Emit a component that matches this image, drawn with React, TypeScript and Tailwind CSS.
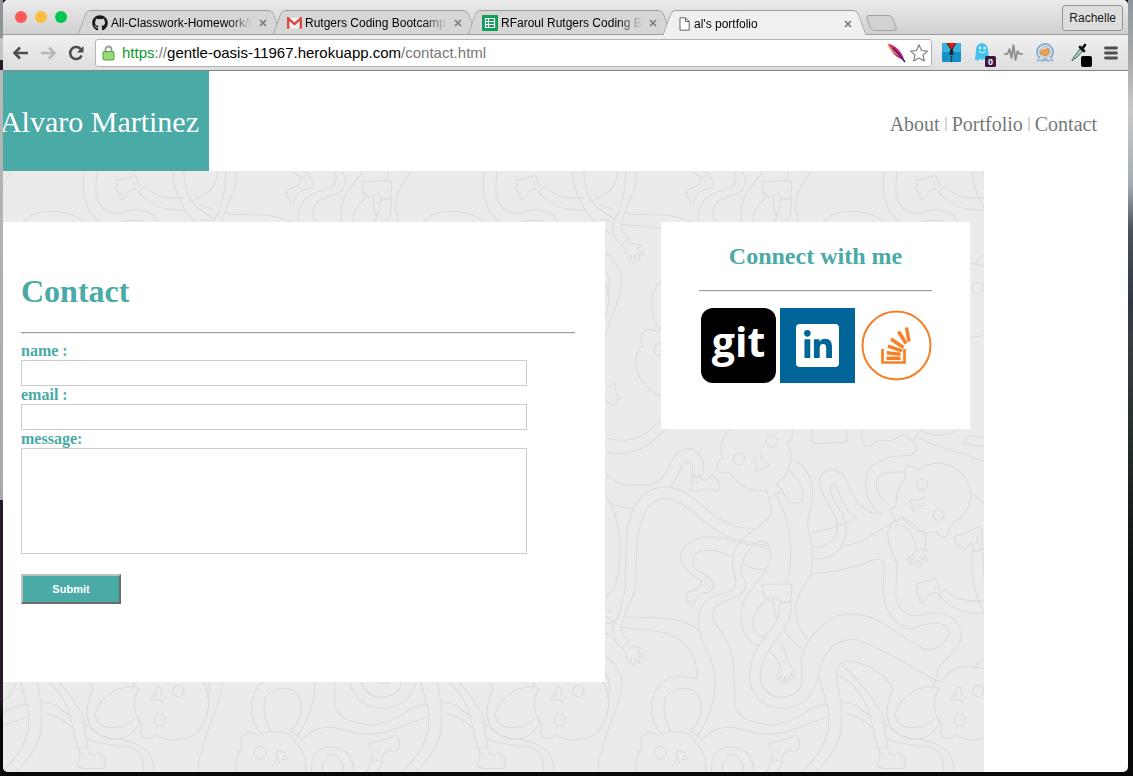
import type { ReactNode } from "react";
import { FaGithub, FaLinkedinIn } from "react-icons/fa";

const doodles = [
  // long limbs, left half
  "M-30 20C20 70 110 85 182 0M-20 85C60 120 150 100 215 0",
  "M15 155C45 205 110 195 140 195C200 190 205 130 230 100C265 70 320 90 308 165M208 203C240 180 240 120 265 122C285 125 275 150 278 165",
  "M30 247C55 265 90 265 103 262M53 600C60 560 75 540 76 490C80 400 75 300 103 262C140 190 210 190 260 220C310 250 340 310 440 325L465 325",
  "M65 622C60 600 110 520 108 490C108 400 110 320 135 275C170 220 210 230 250 255C300 290 350 345 410 360L425 360",
  "M-10 190C10 220 25 235 30 247C75 340 60 440 50 480C45 510 30 530 -37 558",
  "M53 590C30 620 30 650 65 685M65 622C60 640 75 655 88 665M63 685L90 665",
  "M0 565L40 577M75 590C160 595 220 590 260 610Q285 620 298 635",
  "M0 607L35 610M60 622C130 628 200 630 240 660C280 690 290 730 292 770C285 785 260 765 235 768C170 775 155 830 155 860C155 900 165 920 185 943",
  "M213 935C190 900 190 860 195 835C215 800 260 800 285 815C310 840 305 870 300 890C290 920 275 930 268 943",
  "M298 640C292 600 290 560 330 535C360 515 400 525 408 490C410 470 398 455 398 440C395 400 410 370 440 345C480 320 515 290 515 275Q515 255 505 237",
  "M340 600C335 550 370 545 400 535C440 520 440 490 435 480C420 460 422 450 428 425C440 390 470 360 490 364C520 370 515 420 500 445C480 490 425 520 424 580C422 630 440 665 475 678",
  "M298 640C320 700 350 730 345 810C340 860 310 930 290 950",
  "M340 600C370 650 402 680 402 760L404 850C410 890 450 910 510 914C590 914 620 855 685 852",
  "M305 960C360 900 420 925 470 940C560 955 600 910 685 892M275 932L305 960",
  "M445 375C400 365 380 350 320 350C260 355 240 395 242 410C245 450 280 460 303 485M398 412C370 395 330 385 295 395C270 410 275 440 290 450L325 468M300 486L328 467",
  "M420 362L505 378M445 373L505 385M430 430Q460 452 497 449",
  "M-10 694C10 700 70 740 66 800C60 860 20 910 -7 1040L-12 1110M-25 730C20 750 40 780 22 835",
  // limbs, right half
  "M548 212C560 250 590 255 605 245C615 210 600 180 565 150M580 118C640 150 650 220 625 290C620 320 625 330 632 360C640 400 635 430 634 460C610 510 575 530 592 600C600 630 610 645 623 655",
  "M530 228C570 300 575 380 570 440C568 470 560 490 552 492M538 551L575 545",
  "M575 545C575 600 560 620 520 670C490 710 480 740 480 770C490 830 530 835 560 830C620 815 603 780 605 720C610 660 670 610 700 592C740 575 800 580 850 610C900 640 960 690 985 688C1030 688 1060 640 1040 620C1010 595 960 620 930 627C880 620 850 560 850 510C848 460 865 425 835 417C810 418 800 435 760 440C710 455 680 460 634 460",
  "M538 551C540 600 520 620 490 655C450 710 450 740 449 780C455 840 510 865 540 865C600 865 640 835 655 765C665 690 710 660 760 658C800 662 900 720 1010 783",
  "M520 535C515 560 525 590 532 597M500 540C450 580 440 640 500 655M553 632Q580 668 608 685",
  "M535 670Q560 690 560 720M508 693Q530 710 535 732M532 733L562 717",
  "M712 740C740 700 830 740 870 790C890 810 858 840 860 880C865 930 910 960 950 958C1000 950 1010 920 1022 908M1005 800C940 795 885 850 886 890C895 930 960 935 1005 895",
  "M712 740C700 780 735 850 724 920C720 980 680 1020 652 1055M655 765C680 850 690 880 685 920C680 980 640 1020 607 1055",
  "M725 735Q800 800 845 880L863 985M712 765C780 790 815 870 830 980M829 980L866 985",
  "M727 848C770 845 780 870 815 890M733 883C770 880 790 905 828 930",
  "M850 905C900 965 940 950 990 965C1040 980 1065 1010 1060 1060M862 958C930 985 990 970 1015 995Q1035 1020 1030 1060",
  "M1015 768C990 740 1080 700 1083 650C1085 610 1050 570 990 580C960 590 900 600 888 530C885 500 895 440 890 430C850 340 860 330 888 298",
  "M1122 745Q1135 720 1190 694",
  "M888 312C930 320 945 350 948 388M908 290Q960 330 978 345Q978 370 975 392M942 385L983 392",
  "M940 60C960 90 940 110 915 107C820 110 795 150 797 190C800 240 820 270 845 280M915 157C860 152 820 160 830 200C835 230 860 255 885 265",
  "M935 62L958 35M950 50C1010 90 1100 90 1215 155M960 30C1000 50 1040 50 1075 28M1200 75C1140 85 1090 75 1090 60C1100 42 1140 50 1200 55M1110 215L1190 280",
  "M632 338Q700 330 770 295L745 275C720 240 710 190 700 190C680 195 700 240 720 270C760 320 735 430 638 415M640 383C690 380 730 350 705 290C680 240 650 200 662 170C680 140 720 145 740 180C755 230 790 290 850 280M730 378C790 372 830 330 890 303",
  "M1115 397L1160 385M1115 397C1113 500 1130 590 1234 650M1149 400C1149 530 1160 560 1246 607",
  "M1033 507L1013 533M1033 507C1065 540 1100 545 1152 543M1016 527C1060 570 1100 585 1160 578",
  "M335 1060C330 1010 350 980 395 980C440 982 460 1010 462 1060M367 1060C365 1030 380 1005 395 1005C420 1008 430 1030 430 1060",
  // heads
  "M390 28C365 50 360 80 368 112C345 125 345 155 370 160L388 156C410 185 440 220 500 212L508 235L548 212L528 192C565 170 585 120 562 65C580 60 580 45 576 28",
  "M1010 783L1030 778C1050 750 1080 735 1122 740C1240 750 1250 870 1190 940C1150 965 1100 965 1068 945C1050 960 1025 960 1024 938C1020 925 1030 920 1026 915C995 870 995 840 1018 806L1000 798L1010 770",
  "M955 150C1010 110 1090 130 1110 210C1120 260 1080 305 1050 313C1050 335 1045 355 1025 350Q1015 345 1010 335C970 345 930 330 908 290L890 303L867 270L885 265C895 230 880 220 917 172C910 155 915 135 930 138Q945 140 955 150Z",
  "M185 943C210 930 245 935 268 943L290 970C325 1010 325 1060 300 1100C270 1150 200 1150 183 1139C120 1110 90 1050 118 993C135 985 125 985 125 975C115 940 150 925 178 950",
  // noses
  "M460 108C470 130 470 125 466 150C475 158 478 145 482 143C485 158 495 152 495 142C505 145 512 130 505 132C490 130 490 120 480 100",
  "M1102 835C1085 825 1080 820 1085 805C1070 795 1068 805 1070 818C1060 815 1055 825 1065 828C1045 830 1050 845 1062 840C1075 835 1085 840 1087 850",
  "M978 232C950 245 945 238 930 240C925 250 935 250 940 252C925 262 935 268 945 260C935 275 940 280 950 272C955 255 970 255 980 255",
  "M215 1040C235 1015 235 1018 228 1000C232 990 240 985 246 998C255 995 262 1000 252 1010C270 1010 265 1025 255 1018Q235 1020 232 1035",
  // hands
  "M68 686C85 700 75 725 85 730C95 725 88 715 93 715C95 735 100 740 105 735C106 725 100 715 104 712C110 725 118 738 120 728C120 718 110 710 115 708C125 715 135 715 132 708C125 700 112 700 110 695C120 690 125 690 123 684C110 680 95 685 85 672",
  "M540 732C545 745 525 765 532 778C540 775 540 765 545 765C540 780 542 795 548 790C555 785 552 770 555 768C555 785 560 798 565 790C570 780 562 768 565 765C572 785 580 782 578 775C575 765 570 758 572 755C580 770 590 775 588 765C580 755 575 735 557 722",
  "M948 390C945 405 920 412 922 420C930 425 938 412 942 415C930 428 930 438 938 435C946 430 945 420 950 420C945 435 952 445 957 440C960 435 955 425 957 420C960 435 967 442 966 435C966 425 960 415 965 412C972 420 982 428 982 420C975 410 970 400 972 392",
  "M15 -65C20 -50 28 -45 30 -55C34 -38 44 -38 42 -52C50 -42 56 -50 52 -60C62 -58 60 -68 52 -74C40 -90 50 -105 40 -112C30 -105 30 -95 15 -95",
  // feet
  "M273 167L306 166M276 168C285 172 295 172 301 168C310 195 325 172 338 166C352 172 345 180 350 180C362 185 355 193 357 196C366 208 355 212 340 209C320 203 290 218 272 213C270 200 280 190 276 168M288 180Q288 192 297 192",
  "M304 484C305 500 290 512 260 518C253 525 262 528 262 530C253 540 262 542 268 544C265 555 278 562 280 555C290 540 285 530 310 518C330 520 345 505 340 495C335 485 330 480 326 470M316 484Q326 494 316 498",
  "M552 492L498 493C485 490 482 500 488 505C482 512 488 515 492 516C482 525 490 528 495 526C488 535 500 538 505 533C500 545 515 540 520 535C540 525 540 535 542 547L570 545C577 530 575 510 575 492L552 492M563 515Q568 528 557 530",
  "M833 985C850 990 832 1025 832 1038C840 1050 870 1045 895 1045C915 1048 918 1040 912 1036C922 1028 915 1020 912 1022C920 1010 905 1005 903 1010C905 998 895 998 888 1002C875 1008 868 1005 863 988M848 1000Q842 1015 854 1018",
  "M637 28C640 40 630 60 637 68C660 75 700 62 730 68C742 65 742 60 738 58C745 50 740 45 738 45C745 38 740 30 735 30M788 30C780 60 790 85 812 78C825 65 825 60 870 62C890 60 895 50 915 42L935 62",
  "M1120 395L1145 388C1148 350 1145 330 1140 320C1120 322 1095 345 1065 347C1058 355 1065 358 1070 360C1060 368 1070 375 1075 373C1072 385 1080 385 1088 380C1090 395 1100 385 1115 367L1120 395M1130 348Q1138 360 1128 372",
  "M1018 510C1015 490 1010 475 1002 476C980 482 965 490 950 490C942 500 952 502 955 505C940 512 950 520 955 518C945 530 955 532 962 530C955 545 965 555 970 545C985 525 990 515 1010 518L1020 526M998 494Q1008 500 1004 508",
  "M513 1020C525 1000 500 980 510 968C540 965 560 960 580 948C595 945 600 955 593 960C602 965 600 975 596 975C602 985 595 985 592 983C590 998 580 998 572 990C550 995 545 1005 545 1022M508 1018L550 1024M515 1020L500 1060M548 1024Q545 1040 530 1060M535 982Q540 992 530 998",
];

const eyes = [
  [417, 117, 17],
  [515, 64, 17],
  [1135, 813, 17],
  [1079, 900, 17],
  [967, 193, 16],
  [1016, 285, 16],
  [180, 998, 19],
];

const tileOffsets = [-1209, 0, 1209].flatMap((y) => [-1200, 0, 1200].map((x) => [x, y]));

function Wallpaper() {
  return (
    <svg className="absolute inset-0 h-full w-full" aria-hidden="true">
      <defs>
        <g id="doodle" fill="none" stroke="#dcdcdc" strokeWidth="3.2" strokeLinejoin="round">
          {doodles.map((d) => (
            <path key={d} d={d} />
          ))}
          {eyes.map(([cx, cy, r]) => (
            <circle key={`${cx}-${cy}`} cx={cx} cy={cy} r={r} />
          ))}
        </g>
        <pattern
          id="wallpaper"
          width="1200"
          height="1209"
          patternUnits="userSpaceOnUse"
          patternTransform="translate(597 249) scale(0.33333)"
        >
          {tileOffsets.map(([x, y]) => (
            <use key={`${x},${y}`} href="#doodle" x={x} y={y} />
          ))}
        </pattern>
      </defs>
      <rect width="100%" height="100%" fill="url(#wallpaper)" />
    </svg>
  );
}

function GmailIcon() {
  return (
    <svg viewBox="0 0 15 12" className="h-3 w-[15px] shrink-0">
      <rect x="1" y="1" width="13" height="10.5" fill="#f4f4f4" />
      <path d="M3 11L7.5 6.5L12 11" fill="none" stroke="#ccc" strokeWidth=".8" />
      <path d="M1.2 11.8V1.4L7.5 7L13.8 1.4V11.8" fill="none" stroke="#d9473a" strokeWidth="2.3" />
    </svg>
  );
}

function SheetIcon() {
  return (
    <svg viewBox="0 0 16 16" className="size-4 shrink-0">
      <rect width="16" height="16" rx="1" fill="#0f9d58" />
      <path d="M3.5 3.5h9v9h-9zM3.5 6.5h9M3.5 9.5h9M6.5 3.5v9" fill="none" stroke="#fff" strokeWidth="1.2" />
    </svg>
  );
}

function PageIcon() {
  return (
    <svg viewBox="0 0 14 14" className="size-[14px] shrink-0">
      <path d="M3 .8h5.5L12.200 4.500V13.200H3zM8.500 .8V4.500H12.200" fill="#fff" stroke="#666" />
    </svg>
  );
}

function Tab({ icon, title, active = false }: { icon: ReactNode; title: string; active?: boolean }) {
  const tone = active
    ? "before:bg-[#f0f0f0] after:bg-[#f0f0f0] z-10 -mb-px h-[25px]"
    : "before:bg-[#d6d6d6] after:bg-[#d6d6d6] h-6";
  return (
    <div
      className={`relative flex w-[195px] min-w-0 items-center pl-[10px] pr-[6px] before:absolute before:inset-y-0 before:left-0 before:w-[60%] before:-skew-x-[20deg] before:rounded-tl-[5px] before:border-l before:border-t before:border-[#9c9c9c] before:content-[''] after:absolute after:inset-y-0 after:right-0 after:w-[60%] after:skew-x-[20deg] after:rounded-tr-[5px] after:border-r after:border-t after:border-[#9c9c9c] after:content-[''] ${tone}`}
    >
      <div className="relative z-10 flex min-w-0 flex-1 items-center gap-[3px] pt-[2px]">
        {icon}
        <span className="min-w-0 flex-1 overflow-hidden whitespace-nowrap text-[12px] leading-4 text-black [mask-image:linear-gradient(to_right,#000_calc(100%-24px),transparent)]">
          {title}
        </span>
        <button type="button" aria-label="Close tab" className="p-1">
          <svg viewBox="0 0 8 8" className="size-2">
            <path d="M1 1L7 7M7 1L1 7" stroke="#7c7c7c" strokeWidth="1.7" />
          </svg>
        </button>
      </div>
    </div>
  );
}

function Extensions() {
  return (
    <div className="flex items-center gap-3">
      <svg viewBox="0 0 19 19" className="size-[19px]">
        <rect width="19" height="19" rx="1" fill="#1590c8" />
        <rect width="19" height="9" fill="#39afdc" />
        <path d="M5 0H14L10 7H9z" fill="#f0160e" />
        <path d="M5 0L9.500 7L14 0M9.500 6V19" fill="none" stroke="#222" strokeWidth="1.400" strokeDasharray="1.500 .8" />
        <path d="M8 7h3l.5 5h-4z" fill="#222" />
      </svg>
      <svg viewBox="0 -4 23 29" className="h-[29px] w-[23px]">
        <path d="M2 18L3 8C3 -1 15 -1 15 8L16 16L13 18L11 16.500L9 18.500L7 16.500L5 18.500z" fill="#45c1ee" />
        <circle cx="7" cy="6" r="1.200" fill="#fff" />
        <circle cx="11.500" cy="6" r="1.200" fill="#fff" />
        <path d="M6 9Q9.500 12.500 12.500 9" fill="none" stroke="#fff" />
        <rect x="12" y="14" width="11" height="11" rx="1.500" fill="#3c1742" />
        <text x="17.500" y="23" textAnchor="middle" fontSize="9" fontWeight="bold" fill="#fff">0</text>
      </svg>
      <svg viewBox="0 0 19 20" className="-ml-1 h-5 w-[19px]">
        <path d="M0 11H3.500L5.500 6L7.500 15L9.500 2L11.500 17L13.500 8L15.500 11H19" fill="none" stroke="#8b8b8b" strokeWidth="1.700" strokeLinejoin="round" />
      </svg>
      <svg viewBox="0 0 20 20" className="size-5">
        <circle cx="10" cy="9" r="8" fill="#e6eef6" stroke="#84a9cf" strokeWidth="1.800" />
        <circle cx="10" cy="9" r="5.500" fill="#f8dcae" stroke="#a0bcd8" />
        <path d="M5 10C6 6 9 6 10 8C11 4 15 5 14 9C14 13 9 14 5 10z" fill="#eda151" stroke="#ad7341" strokeWidth=".6" />
        <path d="M5 13L2 18L6 17L7 19L9 15M15 13L18 18L14 17L13 19L11 15" fill="#cfe0f0" stroke="#84a9cf" />
      </svg>
      <svg viewBox="0 -5 21 29" className="ml-1 h-[29px] w-[21px]">
        <path d="M2 15L9 6L11.500 8L4 16z" fill="#afd6c3" stroke="#335f50" />
        <path d="M9 4L13 8M11 6L14 2" stroke="#151515" strokeWidth="2.800" strokeLinecap="round" />
        <circle cx="1.500" cy="17" r="1" fill="#335f50" />
        <rect x="10" y="13" width="11" height="11" rx="2" fill="#000" />
      </svg>
      <button type="button" aria-label="Menu">
        <svg viewBox="0 0 14 14" className="size-[14px]">
          <path d="M1.500 2H12.500M1.500 7H12.500M1.500 12H12.500" stroke="#4f4f4f" strokeWidth="2.800" strokeLinecap="round" />
        </svg>
      </button>
    </div>
  );
}

function BrowserChrome() {
  return (
    <div className="font-['Liberation_Sans',Arial,sans-serif]">
      <div className="flex h-[35px] items-end border-b border-[#9c9c9c] bg-linear-to-b from-[#ebebeb] to-[#d0d0d0] pl-3">
        <div className="flex gap-2 self-center">
          <span className="size-3 rounded-full bg-[#fc5b57]" />
          <span className="size-3 rounded-full bg-[#fdbc40]" />
          <span className="size-3 rounded-full bg-[#00c850]" />
        </div>
        <div className="ml-[15px] flex min-w-0 items-end">
          <Tab icon={<FaGithub className="size-4 shrink-0 text-[#191717]" />} title="All-Classwork-Homework/h" />
          <Tab icon={<GmailIcon />} title="Rutgers Coding Bootcamp" />
          <Tab icon={<SheetIcon />} title="RFaroul Rutgers Coding Bo" />
          <Tab icon={<PageIcon />} title="al's portfolio" active />
        </div>
        <button
          type="button"
          aria-label="New tab"
          className="mb-[3px] ml-[6px] h-4 w-[27px] skew-x-[20deg] rounded-[4px] border border-[#a4a4a4] bg-[#d2d2d2]"
        />
        <button
          type="button"
          className="mb-[3px] ml-auto mr-[5px] h-[26px] rounded-[3px] border border-[#949494] bg-[#dedede] px-[6px] text-[12px] leading-4 text-[#1a1a1a]"
        >
          Rachelle
        </button>
      </div>
      <div className="flex h-9 items-center border-b border-[#858585] bg-linear-to-b from-[#f0f0f0] to-[#dedede] pl-[9px] pr-[10px]">
        <div className="flex items-center gap-[11px]">
          <button type="button" aria-label="Back">
            <svg viewBox="0 0 17 14" className="h-[14px] w-[17px]">
              <path d="M16 7H3M8 1.500L2.500 7L8 12.500" fill="none" stroke="#4d4d4d" strokeWidth="2.600" />
            </svg>
          </button>
          <button type="button" aria-label="Forward">
            <svg viewBox="0 0 17 14" className="h-[14px] w-[17px]">
              <path d="M1 7H14M9 1.500L14.500 7L9 12.500" fill="none" stroke="#b8b8b8" strokeWidth="2.600" />
            </svg>
          </button>
          <button type="button" aria-label="Reload">
            <svg viewBox="0 0 16 16" className="size-4">
              <path d="M13 4.500A6 6 0 1 0 13.600 10.500" fill="none" stroke="#4d4d4d" strokeWidth="2.600" />
              <path d="M15.500 1V7.500H9z" fill="#4d4d4d" />
            </svg>
          </button>
        </div>
        <div className="ml-[11px] flex h-7 min-w-0 flex-1 items-center rounded-[3px] border border-[#b4b4b4] bg-white pl-[6px] pr-[2px]">
          <svg viewBox="0 0 13 16" className="h-4 w-[13px]">
            <path d="M3.500 8V4.500C3.500 .5 9.500 .5 9.500 4.500V8" fill="none" stroke="#9b9b9b" strokeWidth="1.800" />
            <rect x="1" y="6.500" width="11" height="8.500" rx="1" fill="#8bd170" stroke="#51a83b" />
            <path d="M2 9H11M2 11H11M2 13H11" stroke="#b0e29b" strokeWidth=".8" />
          </svg>
          <p className="ml-[7px] min-w-0 flex-1 truncate text-[15px] leading-5 text-[#777]">
            <span className="text-[#0b9a2e]">https</span>://
            <span className="text-black">gentle-oasis-11967.herokuapp.com</span>/contact.html
          </p>
          <svg viewBox="0 0 19 20" className="h-5 w-[19px]">
            <path d="M1 1C7 1 16 9 17 17C9 15 4 9 1 1z" fill="#d8246f" />
            <path d="M1 1C3 5 7 10 12 12" fill="none" stroke="#f48a35" strokeWidth="1.500" />
            <path d="M6 5C9 8 13 12 18 19" fill="none" stroke="#3f1c91" strokeWidth="1.600" />
          </svg>
          <button type="button" aria-label="Bookmark" className="ml-[3px]">
            <svg viewBox="0 0 20 20" className="size-5">
              <path d="M10 1.800L12.500 7.500L18.400 8.100L14 12.100L15.300 18L10 15L4.700 18L6 12.100L1.600 8.100L7.500 7.500z" fill="#fff" stroke="#808080" strokeWidth="1.200" strokeLinejoin="round" />
            </svg>
          </button>
        </div>
        <div className="ml-[10px]">
          <Extensions />
        </div>
      </div>
    </div>
  );
}

function StackOverflowLogo() {
  return (
    <svg viewBox="0 0 75 75" className="size-[75px]">
      <circle cx="37.500" cy="37.500" r="34" fill="#fff" stroke="#f58025" strokeWidth="2" />
      <g fill="none" stroke="#f58025">
        <path d="M23.500 41V54.500H45.500V41" strokeWidth="2.700" />
        <path d="M27.500 50.300H41.500M27.700 44.800L41.600 46.400M29 38.200L43 42.800M32 31L44.500 39.500M39.500 23.500L47 35.500M47.500 19.500L50 33.500" strokeWidth="3.400" />
      </g>
    </svg>
  );
}

function SiteHeader() {
  return (
    <header className="flex h-[100px] items-center justify-between bg-white">
      <div className="flex h-full w-[206px] items-center justify-end overflow-hidden bg-[#4aaaa5] pr-[10px] pt-[2px]">
        <p className="whitespace-nowrap text-[30px] leading-9 text-white">Alvaro Martinez</p>
      </div>
      <nav className="mr-[31px] mt-[6px] flex items-center gap-[5px] text-[20px] leading-6 text-[#777]">
        <a href="#about">About</a>
        <span className="h-[14px] w-[2px] bg-[#d8d8d8]" />
        <a href="#portfolio">Portfolio</a>
        <span className="h-[14px] w-[2px] bg-[#d8d8d8]" />
        <a href="#contact">Contact</a>
      </nav>
    </header>
  );
}

const rule = "border-b border-t border-b-[#eee] border-t-[#999]";
const field = "block w-[506px] max-w-full border border-[#ccc] bg-white px-1";

function ContactForm() {
  return (
    <section id="contact" className="h-[460px] min-w-0 flex-1 bg-white pl-[18px] pr-[30px] pt-[51px]">
      <h1 className="text-[32px] font-bold leading-9 text-[#4aaaa5]">Contact</h1>
      <hr className={`mb-2 mt-[23px] ${rule}`} />
      <form className="text-[16px] font-bold leading-[18px] text-[#4aaaa5]">
        <label htmlFor="name" className="block">name :</label>
        <input id="name" type="text" className={`h-[26px] ${field}`} />
        <label htmlFor="email" className="block">email :</label>
        <input id="email" type="email" className={`h-[26px] ${field}`} />
        <label htmlFor="message" className="block">message:</label>
        <textarea id="message" className={`h-[106px] resize-none ${field}`} />
        <button
          type="button"
          className="mt-5 h-[30px] w-[100px] border-2 border-b-[#6b6b6b] border-l-[#c0c0c0] border-r-[#6b6b6b] border-t-[#c0c0c0] bg-[#4aaaa5] font-['Liberation_Sans',Arial,sans-serif] text-[11px] leading-4 text-white"
        >
          Submit
        </button>
      </form>
    </section>
  );
}

function ConnectCard() {
  return (
    <aside className="h-[207px] w-[309px] shrink-0 bg-white pt-5">
      <h2 className="text-center text-[24px] font-bold leading-7 text-[#4aaaa5]">Connect with me</h2>
      <hr className={`mx-[38px] mb-4 mt-5 ${rule}`} />
      <div className="flex gap-1 pl-10">
        <a href="#git" className="flex size-[75px] items-start justify-center rounded-[12px] bg-black font-['Open_Sans',sans-serif] text-[41px] font-bold leading-[66px] text-white">
          git
        </a>
        <a href="#linkedin" aria-label="LinkedIn" className="flex size-[75px] items-center justify-center bg-[#069]">
          <span className="flex size-[43px] items-center justify-center rounded-[4px] bg-white">
            <FaLinkedinIn className="size-[32px] text-[#069]" />
          </span>
        </a>
        <a href="#stackoverflow" aria-label="Stack Overflow">
          <StackOverflowLogo />
        </a>
      </div>
    </aside>
  );
}

export default function App() {
  return (
    <div className="flex min-h-screen bg-[#070908] pb-1 font-['Liberation_Serif','Times_New_Roman',serif]">
      <div className="w-[3px] shrink-0 bg-[linear-gradient(to_bottom,#8e9499_0,#8e9499_38px,#c4c4c4_38px,#c4c4c4_60px,#241a28_60px,#241a28_70px,#b8b8b8_70px,#a8a8a8_500px,#241a28_500px,#241a28_700px,#050805_720px)]" />
      <div className="flex min-w-0 flex-1 flex-col overflow-hidden rounded-[5px] bg-white">
        <BrowserChrome />
        <SiteHeader />
        <main className="relative mr-36 flex-1 bg-[#ebebeb]">
          <Wallpaper />
          <div className="relative flex items-start gap-14 pb-[90px] pr-[14px] pt-[51px]">
            <ContactForm />
            <ConnectCard />
          </div>
        </main>
      </div>
      <div className="w-[5px] shrink-0 bg-[linear-gradient(to_bottom,#8b979e_0,#a9a9a9_60px,#c9c9c9_110px,#a4adb2_185px,#4a5358_230px,#2f3a45_300px,#3a3c40_340px,#28302f_430px,#0f1512_560px,#070a08_700px)]" />
    </div>
  );
}
